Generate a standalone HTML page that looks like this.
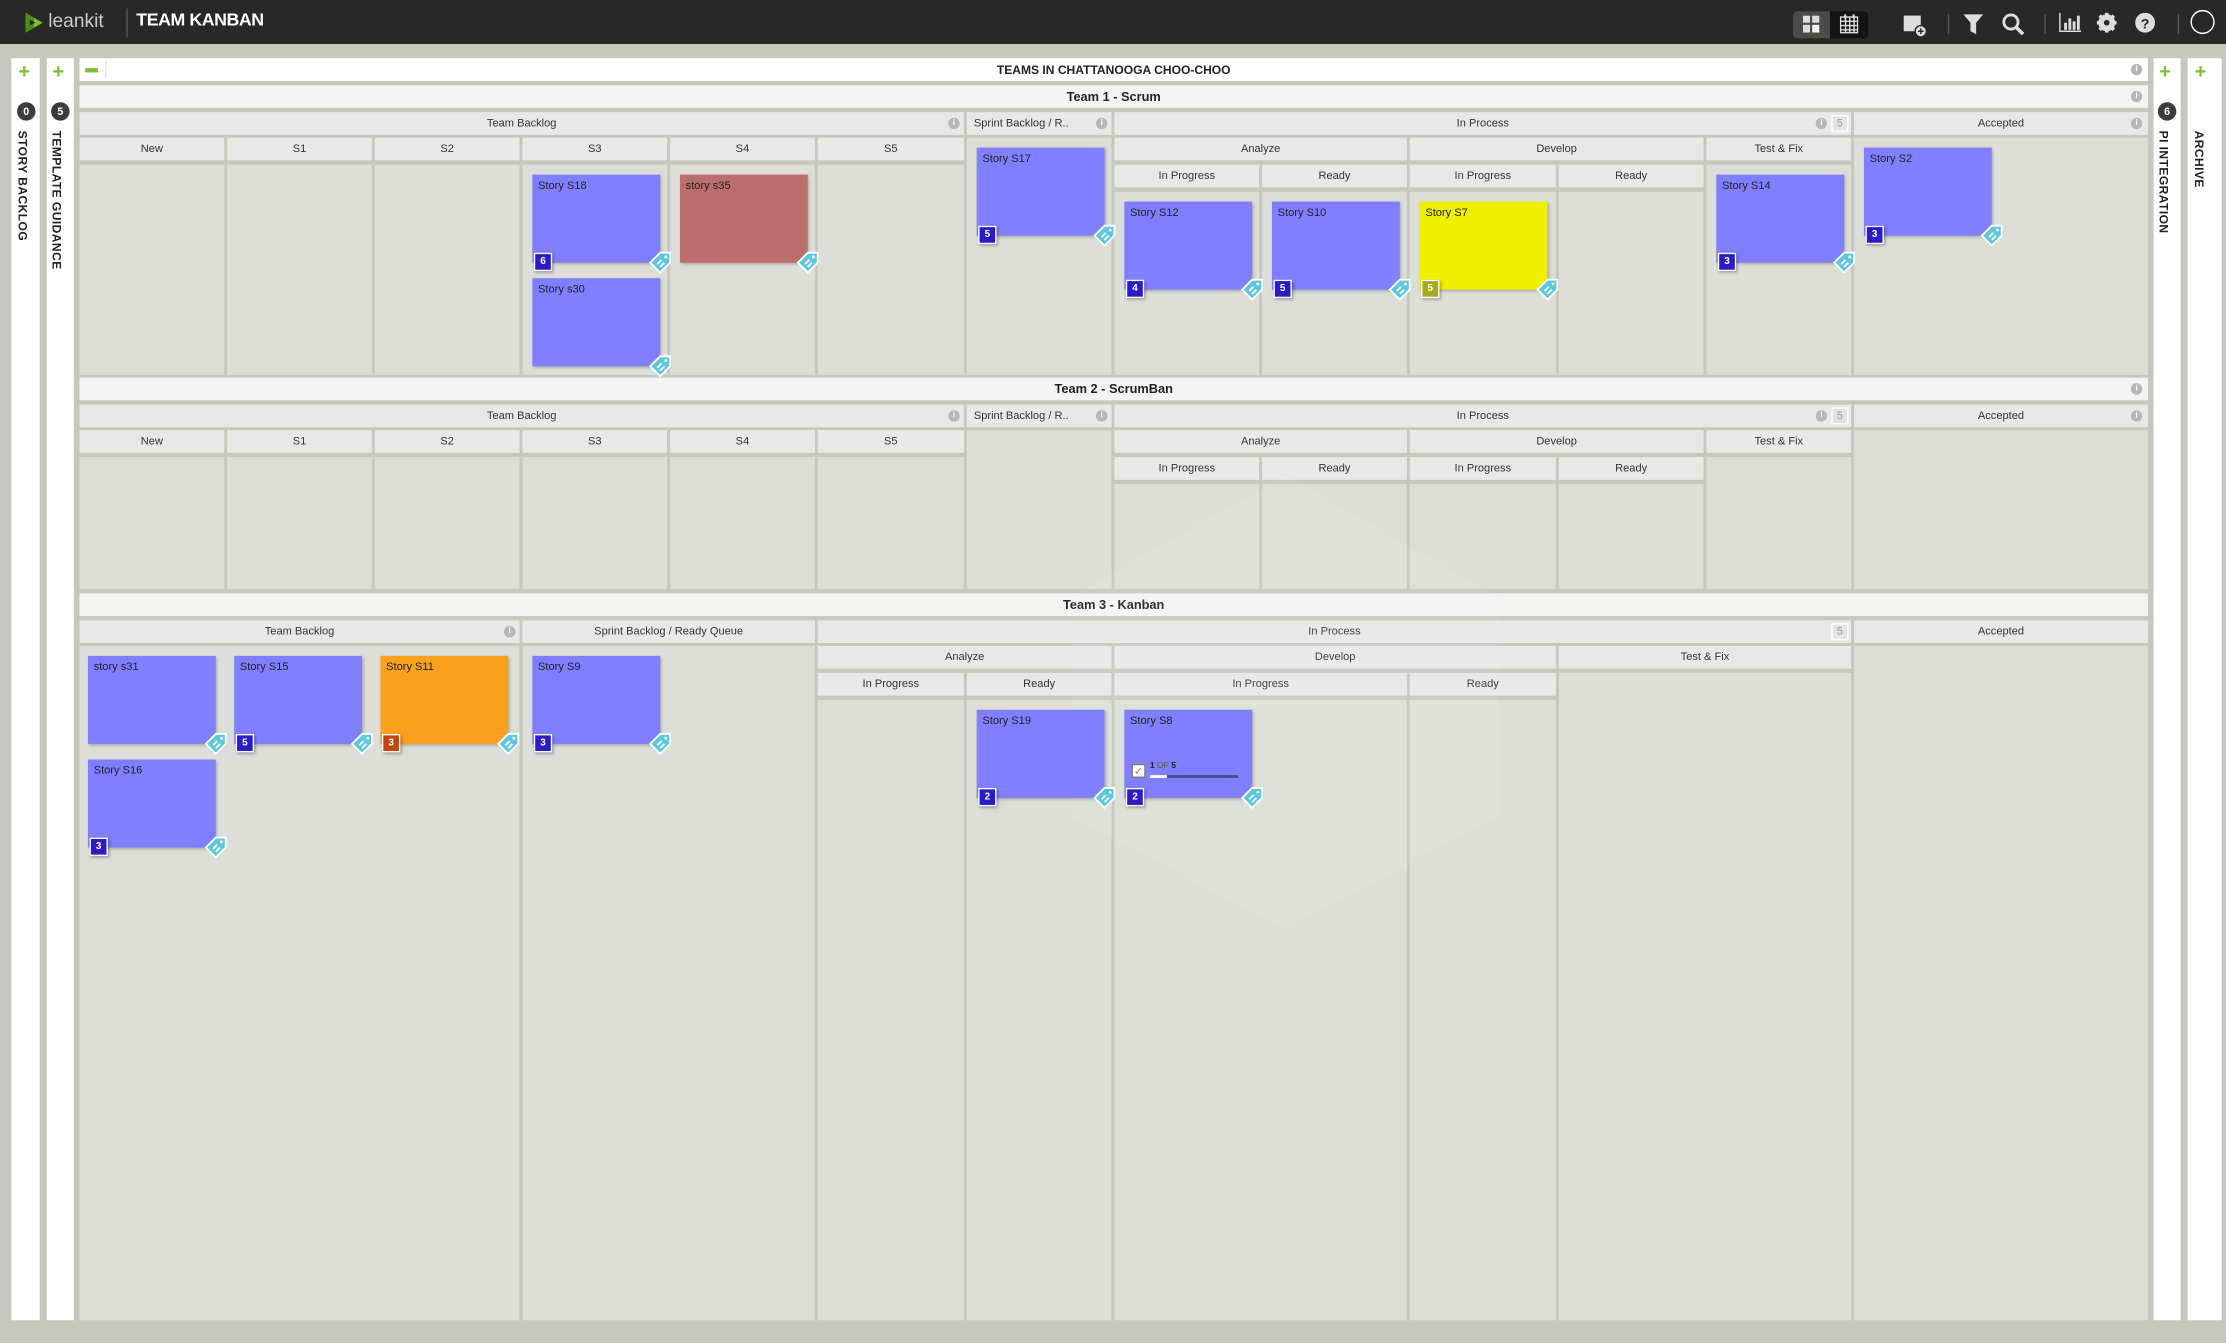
<!DOCTYPE html>
<html><head><meta charset="utf-8"><style>
html,body{margin:0;padding:0;width:2226px;height:1343px;overflow:hidden;background:#c5c8bd;font-family:"Liberation Sans",Arial,sans-serif}
#w{position:absolute;left:0;top:0;width:1568px;height:946px;transform:scale(1.41964);transform-origin:0 0;background:#c5c8bd}
.a{position:absolute}
.c{position:absolute;background:#dcded7}
.h{position:absolute;background:#e8e9e4;color:#333;font-size:7.8px;text-align:center;line-height:16px;white-space:nowrap;overflow:hidden}
.t{position:absolute;background:#f3f3f1;color:#222;font-size:9px;font-weight:bold;text-align:center;line-height:16px;left:56px;width:1457px;height:16px}
.i{position:absolute;width:8px;height:8px;border-radius:50%;background:#b5b7b0;color:#fff;font-size:6px;line-height:8px;text-align:center;font-weight:bold}
.k{position:absolute;width:90px;height:62px;background:#7f7fff;box-shadow:1px 1px 2px rgba(0,0,0,.25);font-size:7.8px;color:#222;padding:0;box-sizing:border-box}
.k span{position:absolute;left:4px;top:3px}
.b{position:absolute;left:1px;bottom:-6px;width:11px;height:11px;background:#2a1bc8;border:1px solid #fff;color:#fff;font-size:7px;font-weight:bold;text-align:center;line-height:11px;box-shadow:1px 1px 2px rgba(0,0,0,.3)}
.g{position:absolute;right:-8px;bottom:-8px;width:16px;height:16px}
.side{position:absolute;background:#fff;top:41px;height:889px}
.pl{position:absolute;color:#7dc22a;font-weight:bold;font-size:14px;line-height:14px}
.cnt{position:absolute;width:13px;height:13px;border-radius:50%;background:#3b3d38;color:#fff;font-size:7.5px;font-weight:bold;text-align:center;line-height:13px}
.vt{position:absolute;writing-mode:vertical-rl;font-weight:bold;font-size:8.5px;color:#222;letter-spacing:.3px}
.wip{position:absolute;width:10px;height:10px;border:1px solid #fff;background:#e3e4df;color:#999;font-size:7.5px;text-align:center;line-height:10px}
.dv{position:absolute;top:10px;width:1px;height:14px;background:#555}
</style></head><body><div id="w">
<!-- top bar -->
<div class="a" style="left:0;top:0;width:1568px;height:31px;background:#272a24"></div>
<svg class="a" style="left:16px;top:8px" width="16" height="16" viewBox="0 0 16 16"><polygon points="2,1 14,8 2,15" fill="#7dc22a"/><polygon points="2,1 8,4.5 8,11.5 2,15" fill="#4e8a1c"/><polygon points="5,6 9,8 5,10" fill="#272a24"/></svg>
<div class="a" style="left:34px;top:7px;color:#ccc;font-size:13.5px;">leankit</div>
<div class="a" style="left:89px;top:6px;width:1px;height:20px;background:#555"></div>
<div class="a" style="left:96px;top:7px;color:#fff;font-size:12.5px;font-weight:bold;letter-spacing:-.3px">TEAM KANBAN</div>
<div class="a" style="left:1263px;top:8px;width:26px;height:19px;background:#4a4d46;border-radius:3px 0 0 3px"></div>
<div class="a" style="left:1289px;top:8px;width:27px;height:19px;background:#131511;border-radius:0 3px 3px 0"></div>
<svg class="a" style="left:1270px;top:11px" width="12" height="12"><rect x="0" y="0" width="5" height="5" fill="#ddd"/><rect x="0" y="6.5" width="5" height="5.5" fill="#ddd"/><rect x="6.5" y="0" width="5" height="5" fill="#ddd"/><rect x="6.5" y="6.5" width="5" height="5.5" fill="#f5f5f0"/></svg>
<svg class="a" style="left:1296px;top:10px" width="13" height="14"><rect x="0.5" y="2" width="12" height="11" fill="none" stroke="#ddd"/><path d="M1 5h11M1 8h11M1 11h11M4 2v11M7 2v11M10 2v11" stroke="#ddd" stroke-width="1"/><rect x="3" y="0" width="1.5" height="3" fill="#ddd"/><rect x="9" y="0" width="1.5" height="3" fill="#ddd"/></svg>
<svg class="a" style="left:1340px;top:10px" width="18" height="16"><rect x="1" y="1" width="12" height="11" fill="#ddd"/><circle cx="13" cy="12" r="4" fill="#ddd" stroke="#272a24"/><path d="M13 10v4M11 12h4" stroke="#272a24"/></svg>
<div class="dv" style="left:1372px"></div>
<svg class="a" style="left:1383px;top:10px" width="14" height="14"><path d="M0 0h14l-5 6v8l-4-2v-6z" fill="#ddd"/></svg>
<svg class="a" style="left:1410px;top:9px" width="16" height="16"><circle cx="6.5" cy="6.5" r="5" fill="none" stroke="#ddd" stroke-width="2"/><path d="M10 10l5 5" stroke="#ddd" stroke-width="2.5"/></svg>
<div class="dv" style="left:1440px"></div>
<svg class="a" style="left:1450px;top:9px" width="16" height="14"><path d="M1 0v13h15" stroke="#ddd" fill="none"/><rect x="4" y="7" width="2" height="5" fill="#ddd"/><rect x="7" y="4" width="2" height="8" fill="#ddd"/><rect x="10" y="6" width="2" height="6" fill="#ddd"/><rect x="13" y="2" width="2" height="10" fill="#ddd"/></svg>
<svg class="a" style="left:1477px;top:9px" width="14" height="14" viewBox="0 0 14 14"><circle cx="7" cy="7" r="4.5" fill="none" stroke="#ddd" stroke-width="3"/><path d="M7 0v14M0 7h14M2 2l10 10M12 2L2 12" stroke="#ddd" stroke-width="2.5"/><circle cx="7" cy="7" r="2" fill="#272a24"/></svg>
<svg class="a" style="left:1504px;top:9px" width="14" height="14"><circle cx="7" cy="7" r="7" fill="#ddd"/><text x="7" y="11" font-size="10" font-weight="bold" text-anchor="middle" fill="#272a24" font-family="Liberation Sans">?</text></svg>
<div class="dv" style="left:1534px"></div>
<div class="a" style="left:1543px;top:7px;width:15px;height:15px;border:1.5px solid #fff;border-radius:50%"></div>

<!-- sides -->
<div class="side" style="left:8px;width:20px"></div><div class="pl" style="left:13px;top:43px">+</div><div class="cnt" style="left:12px;top:72px">0</div><div class="vt" style="left:11px;top:92px">STORY BACKLOG</div>
<div class="side" style="left:33px;width:19px"></div><div class="pl" style="left:37px;top:43px">+</div><div class="cnt" style="left:36px;top:72px">5</div><div class="vt" style="left:35px;top:92px">TEMPLATE GUIDANCE</div>
<div class="side" style="left:1517px;width:19px"></div><div class="pl" style="left:1521px;top:43px">+</div><div class="cnt" style="left:1520px;top:72px">6</div><div class="vt" style="left:1519px;top:92px">PI INTEGRATION</div>
<div class="side" style="left:1541px;width:24px"></div><div class="pl" style="left:1546px;top:43px">+</div><div class="vt" style="left:1544px;top:92px">ARCHIVE</div>

<!-- title -->
<div class="a" style="left:56px;top:41px;width:1457px;height:16px;background:#fff;font-size:8.5px;font-weight:bold;text-align:center;line-height:16px;color:#222">TEAMS IN CHATTANOOGA CHOO-CHOO</div>
<div class="a" style="left:60px;top:48px;width:9px;height:3px;background:#7dc22a"></div>
<div class="a" style="left:74px;top:43px;width:1px;height:12px;background:#e5e5e5"></div>
<div class="i" style="left:1501px;top:45px">i</div>

<!-- TEAM 1 -->
<div class="t" style="top:60px">Team 1 - Scrum</div><div class="i" style="left:1501px;top:64px">i</div>
<div class="h" style="left:56px;top:79px;width:623px;height:16px">Team Backlog</div><div class="i" style="left:668px;top:83px">i</div>
<div class="h" style="left:681px;top:79px;width:102px;height:16px;text-align:left;padding-left:5px;box-sizing:border-box">Sprint Backlog / R..</div><div class="i" style="left:772px;top:83px">i</div>
<div class="h" style="left:785px;top:79px;width:519px;height:16px">In Process</div><div class="i" style="left:1279px;top:83px">i</div><div class="wip" style="left:1290px;top:81px">5</div>
<div class="h" style="left:1306px;top:79px;width:207px;height:16px">Accepted</div><div class="i" style="left:1501px;top:83px">i</div>
<div class="h" style="left:56px;top:97px;width:102px;height:16px">New</div>
<div class="h" style="left:160px;top:97px;width:102px;height:16px">S1</div>
<div class="h" style="left:264px;top:97px;width:102px;height:16px">S2</div>
<div class="h" style="left:368px;top:97px;width:102px;height:16px">S3</div>
<div class="h" style="left:472px;top:97px;width:102px;height:16px">S4</div>
<div class="h" style="left:576px;top:97px;width:103px;height:16px">S5</div>
<div class="h" style="left:785px;top:97px;width:206px;height:16px">Analyze</div>
<div class="h" style="left:993px;top:97px;width:207px;height:16px">Develop</div>
<div class="h" style="left:1202px;top:97px;width:102px;height:16px">Test &amp; Fix</div>
<div class="h" style="left:785px;top:116px;width:102px;height:16px">In Progress</div>
<div class="h" style="left:889px;top:116px;width:102px;height:16px">Ready</div>
<div class="h" style="left:993px;top:116px;width:103px;height:16px">In Progress</div>
<div class="h" style="left:1098px;top:116px;width:102px;height:16px">Ready</div>
<div class="c" style="left:56px;top:116px;width:102px;height:148px"></div>
<div class="c" style="left:160px;top:116px;width:102px;height:148px"></div>
<div class="c" style="left:264px;top:116px;width:102px;height:148px"></div>
<div class="c" style="left:368px;top:116px;width:102px;height:148px"></div>
<div class="c" style="left:472px;top:116px;width:102px;height:148px"></div>
<div class="c" style="left:576px;top:116px;width:103px;height:148px"></div>
<div class="c" style="left:681px;top:97px;width:102px;height:167px"></div>
<div class="c" style="left:785px;top:135px;width:102px;height:129px"></div>
<div class="c" style="left:889px;top:135px;width:102px;height:129px"></div>
<div class="c" style="left:993px;top:135px;width:103px;height:129px"></div>
<div class="c" style="left:1098px;top:135px;width:102px;height:129px"></div>
<div class="c" style="left:1202px;top:116px;width:102px;height:148px"></div>
<div class="c" style="left:1306px;top:97px;width:207px;height:167px"></div>

<!-- TEAM 2 -->
<div class="t" style="top:266px">Team 2 - ScrumBan</div><div class="i" style="left:1501px;top:270px">i</div>
<div class="h" style="left:56px;top:285px;width:623px;height:16px">Team Backlog</div><div class="i" style="left:668px;top:289px">i</div>
<div class="h" style="left:681px;top:285px;width:102px;height:16px;text-align:left;padding-left:5px;box-sizing:border-box">Sprint Backlog / R..</div><div class="i" style="left:772px;top:289px">i</div>
<div class="h" style="left:785px;top:285px;width:519px;height:16px">In Process</div><div class="i" style="left:1279px;top:289px">i</div><div class="wip" style="left:1290px;top:287px">5</div>
<div class="h" style="left:1306px;top:285px;width:207px;height:16px">Accepted</div><div class="i" style="left:1501px;top:289px">i</div>
<div class="h" style="left:56px;top:303px;width:102px;height:16px">New</div>
<div class="h" style="left:160px;top:303px;width:102px;height:16px">S1</div>
<div class="h" style="left:264px;top:303px;width:102px;height:16px">S2</div>
<div class="h" style="left:368px;top:303px;width:102px;height:16px">S3</div>
<div class="h" style="left:472px;top:303px;width:102px;height:16px">S4</div>
<div class="h" style="left:576px;top:303px;width:103px;height:16px">S5</div>
<div class="h" style="left:785px;top:303px;width:206px;height:16px">Analyze</div>
<div class="h" style="left:993px;top:303px;width:207px;height:16px">Develop</div>
<div class="h" style="left:1202px;top:303px;width:102px;height:16px">Test &amp; Fix</div>
<div class="h" style="left:785px;top:322px;width:102px;height:16px">In Progress</div>
<div class="h" style="left:889px;top:322px;width:102px;height:16px">Ready</div>
<div class="h" style="left:993px;top:322px;width:103px;height:16px">In Progress</div>
<div class="h" style="left:1098px;top:322px;width:102px;height:16px">Ready</div>
<div class="c" style="left:56px;top:322px;width:102px;height:93px"></div>
<div class="c" style="left:160px;top:322px;width:102px;height:93px"></div>
<div class="c" style="left:264px;top:322px;width:102px;height:93px"></div>
<div class="c" style="left:368px;top:322px;width:102px;height:93px"></div>
<div class="c" style="left:472px;top:322px;width:102px;height:93px"></div>
<div class="c" style="left:576px;top:322px;width:103px;height:93px"></div>
<div class="c" style="left:681px;top:303px;width:102px;height:112px"></div>
<div class="c" style="left:785px;top:341px;width:102px;height:74px"></div>
<div class="c" style="left:889px;top:341px;width:102px;height:74px"></div>
<div class="c" style="left:993px;top:341px;width:103px;height:74px"></div>
<div class="c" style="left:1098px;top:341px;width:102px;height:74px"></div>
<div class="c" style="left:1202px;top:322px;width:102px;height:93px"></div>
<div class="c" style="left:1306px;top:303px;width:207px;height:112px"></div>

<!-- TEAM 3 -->
<div class="t" style="top:418px">Team 3 - Kanban</div>
<div class="h" style="left:56px;top:437px;width:310px;height:16px">Team Backlog</div><div class="i" style="left:355px;top:441px">i</div>
<div class="h" style="left:368px;top:437px;width:206px;height:16px">Sprint Backlog / Ready Queue</div>
<div class="h" style="left:576px;top:437px;width:728px;height:16px">In Process</div><div class="wip" style="left:1290px;top:439px">5</div>
<div class="h" style="left:1306px;top:437px;width:207px;height:16px">Accepted</div>
<div class="h" style="left:576px;top:455px;width:207px;height:16px">Analyze</div>
<div class="h" style="left:785px;top:455px;width:311px;height:16px">Develop</div>
<div class="h" style="left:1098px;top:455px;width:206px;height:16px">Test &amp; Fix</div>
<div class="h" style="left:576px;top:474px;width:103px;height:16px">In Progress</div>
<div class="h" style="left:681px;top:474px;width:102px;height:16px">Ready</div>
<div class="h" style="left:785px;top:474px;width:206px;height:16px">In Progress</div>
<div class="h" style="left:993px;top:474px;width:103px;height:16px">Ready</div>
<div class="c" style="left:56px;top:455px;width:310px;height:475px"></div>
<div class="c" style="left:368px;top:455px;width:206px;height:475px"></div>
<div class="c" style="left:576px;top:493px;width:103px;height:437px"></div>
<div class="c" style="left:681px;top:493px;width:102px;height:437px"></div>
<div class="c" style="left:785px;top:493px;width:206px;height:437px"></div>
<div class="c" style="left:993px;top:493px;width:103px;height:437px"></div>
<div class="c" style="left:1098px;top:474px;width:206px;height:456px"></div>
<div class="c" style="left:1306px;top:455px;width:207px;height:475px"></div>

<!-- watermark -->
<svg class="a" style="left:740px;top:330px" width="330" height="330" viewBox="0 0 330 330"><polygon points="165,5 315,90 315,245 165,325 15,245 15,90" fill="#fff" opacity=".08"/></svg>

<!-- cards -->
<svg width="0" height="0" style="position:absolute"><defs><g id="tg"><path d="M8 1L15 1L15 8L8 15L1 8Z" fill="#5bc8e0" stroke="#fff" stroke-width="1.3"/><path d="M6 9l3-3M8 11l3-3" stroke="#fff" stroke-width="1.3"/><circle cx="12" cy="4" r="1" fill="#fff"/></g></defs></svg>
<div class="k" style="left:375px;top:123px"><span>Story S18</span><div class="b">6</div><svg class="g"><use href="#tg"/></svg></div>
<div class="k" style="left:479px;top:123px;background:#bb6e6c"><span>story s35</span><svg class="g"><use href="#tg"/></svg></div>
<div class="k" style="left:375px;top:196px"><span>Story s30</span><svg class="g"><use href="#tg"/></svg></div>
<div class="k" style="left:688px;top:104px"><span>Story S17</span><div class="b">5</div><svg class="g"><use href="#tg"/></svg></div>
<div class="k" style="left:792px;top:142px"><span>Story S12</span><div class="b">4</div><svg class="g"><use href="#tg"/></svg></div>
<div class="k" style="left:896px;top:142px"><span>Story S10</span><div class="b">5</div><svg class="g"><use href="#tg"/></svg></div>
<div class="k" style="left:1000px;top:142px;background:#eff000"><span>Story S7</span><div class="b" style="background:#a9a81f">5</div><svg class="g"><use href="#tg"/></svg></div>
<div class="k" style="left:1209px;top:123px"><span>Story S14</span><div class="b">3</div><svg class="g"><use href="#tg"/></svg></div>
<div class="k" style="left:1313px;top:104px"><span>Story S2</span><div class="b">3</div><svg class="g"><use href="#tg"/></svg></div>
<div class="k" style="left:62px;top:462px"><span>story s31</span><svg class="g"><use href="#tg"/></svg></div>
<div class="k" style="left:165px;top:462px"><span>Story S15</span><div class="b">5</div><svg class="g"><use href="#tg"/></svg></div>
<div class="k" style="left:268px;top:462px;background:#f9a11e"><span>Story S11</span><div class="b" style="background:#c1450f">3</div><svg class="g"><use href="#tg"/></svg></div>
<div class="k" style="left:375px;top:462px"><span>Story S9</span><div class="b">3</div><svg class="g"><use href="#tg"/></svg></div>
<div class="k" style="left:62px;top:535px"><span>Story S16</span><div class="b">3</div><svg class="g"><use href="#tg"/></svg></div>
<div class="k" style="left:688px;top:500px"><span>Story S19</span><div class="b">2</div><svg class="g"><use href="#tg"/></svg></div>
<div class="k" style="left:792px;top:500px"><span>Story S8</span><div class="b">2</div><svg class="g"><use href="#tg"/></svg>
<div class="a" style="left:5px;top:38px;width:10px;height:10px;background:#fff;border:1px solid #777;box-sizing:border-box;color:#888;font-size:8px;line-height:9px;text-align:center">✓</div>
<div class="a" style="left:18px;top:37px;font-size:6px;font-weight:bold;color:#222">1 <span style="position:static;color:#554;font-weight:normal">OF</span> 5</div>
<div class="a" style="left:18px;top:46px;width:62px;height:2px;background:#4a4890"></div><div class="a" style="left:18px;top:46px;width:12px;height:2px;background:#fff"></div>
</div>
</div></body></html>
